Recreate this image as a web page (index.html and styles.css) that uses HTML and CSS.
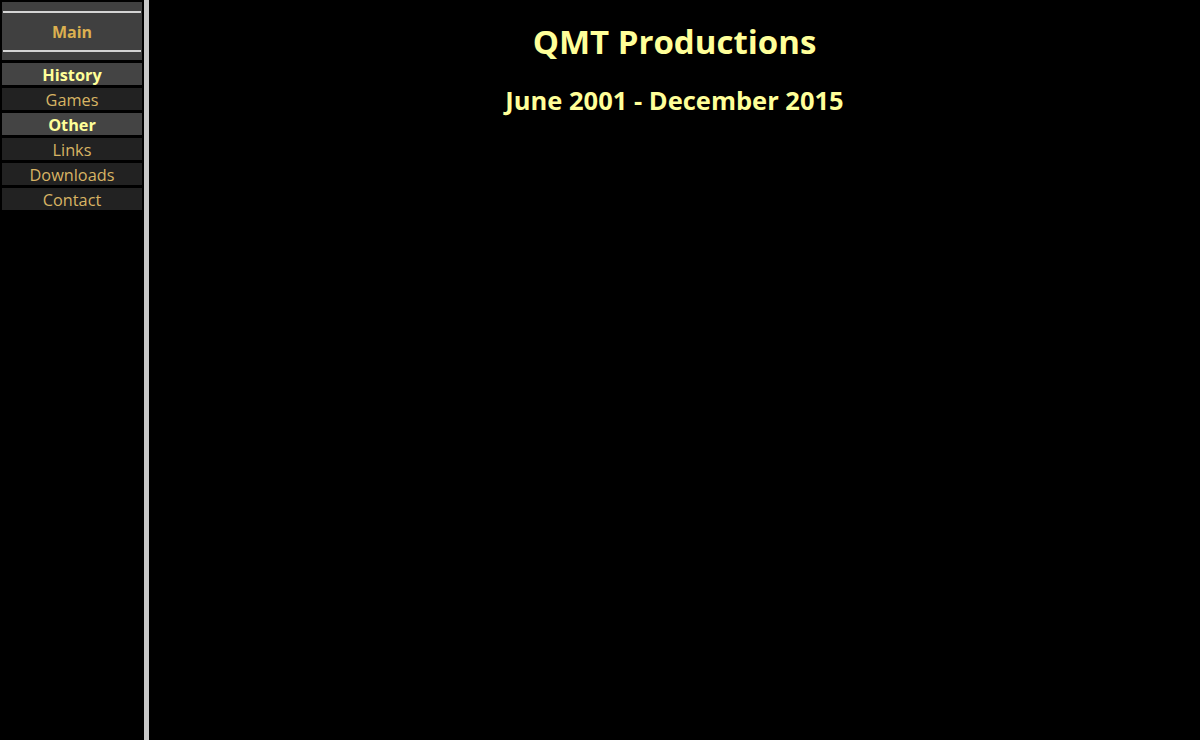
FILE: index.html
```html
<!DOCTYPE html>
<html>
<head>
<meta charset="utf-8">
<title>QMT Productions</title>
<link rel="stylesheet" href="styles.css">
</head>
<body>
<div class="page">
  <nav class="sidebar">
    <div class="main-box">
      <div class="rule"></div>
      <div class="main-label">Main</div>
      <div class="rule"></div>
    </div>
    <div class="item head">History</div>
    <div class="item">Games</div>
    <div class="item head">Other</div>
    <div class="item">Links</div>
    <div class="item">Downloads</div>
    <div class="item">Contact</div>
  </nav>
  <div class="divider"></div>
  <main class="content">
    <h1 class="title">QMT Productions</h1>
    <h2 class="subtitle">June 2001 - December 2015</h2>
  </main>
</div>
</body>
</html>
```
FILE: styles.css
```css
html, body {
  margin: 0;
  padding: 0;
  background: #000;
  height: 100%;
}
body {
  font-family: "Open Sans", "Noto Sans", sans-serif;
}
.page {
  display: flex;
  min-height: 740px;
}
.sidebar {
  width: 140px;
  padding: 2px 2px 0 2px;
  display: flex;
  flex-direction: column;
  gap: 3px;
}
.main-box {
  height: 58px;
  background: #404040;
  display: flex;
  flex-direction: column;
  padding-top: 9px;
  box-sizing: border-box;
}
.rule {
  height: 2px;
  margin: 0 1px;
  background: #d4d4d4;
}
.main-label {
  height: 37px;
  line-height: 38px;
  text-align: center;
  font-weight: bold;
  font-size: 16px;
  color: #dcb050;
}
.item {
  height: 22px;
  line-height: 24px;
  overflow: hidden;
  text-align: center;
  font-size: 16.3px;
  background: #222;
  color: #d8b464;
}
.item.head {
  background: #444;
  font-weight: bold;
  color: #ffff99;
}
.divider {
  width: 5px;
  background: #c8c8c8;
}
.content {
  flex: 1;
  text-align: center;
  color: #ffff99;
}
.title {
  margin: 20px 0 0;
  font-size: 33px;
  line-height: 44px;
  font-weight: bold;
}
.subtitle {
  margin: 19px 0 0;
  font-size: 25.5px;
  line-height: 34px;
  font-weight: bold;
}
```
